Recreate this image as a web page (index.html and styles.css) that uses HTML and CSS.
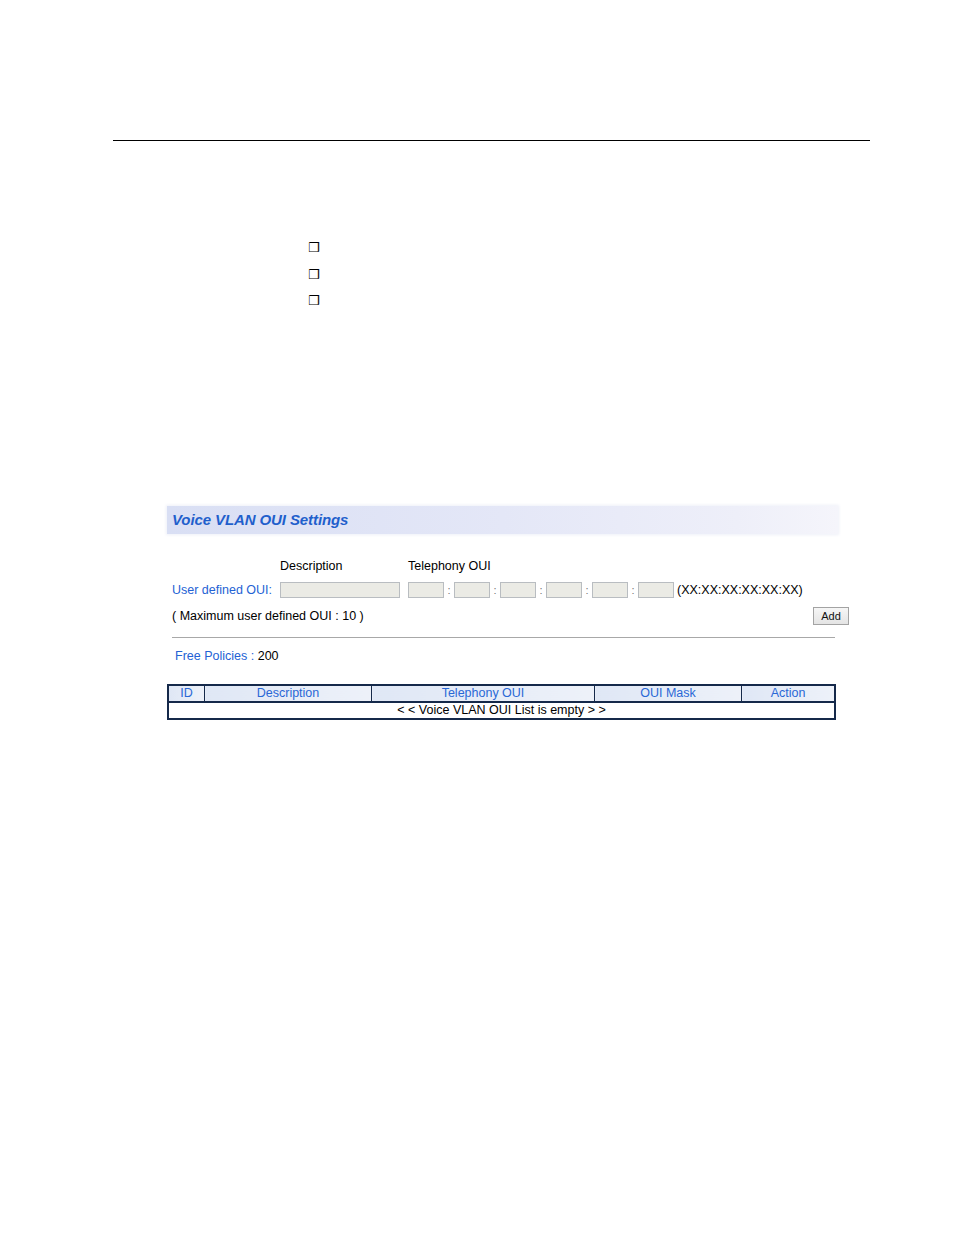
FILE: index.html
```html
<!DOCTYPE html>
<html>
<head>
<meta charset="utf-8">
<link rel="stylesheet" href="styles.css">
</head>
<body>
<div class="page">
  <div class="rule"></div>
  <ul class="bullets">
    <li>❒</li>
    <li>❒</li>
    <li>❒</li>
  </ul>
  <div class="panel">
    <div class="title-bar"><span class="title">Voice VLAN OUI Settings</span></div>
    <div class="form">
      <div class="row labels">
        <span class="lbl-desc">Description</span>
        <span class="lbl-tel">Telephony OUI</span>
      </div>
      <div class="row entry">
        <span class="blue lbl-user">User defined OUI:</span>
        <span class="inp inp-desc"></span>
        <span class="oui">
          <span class="inp inp-oui"></span><span class="sep">:</span>
          <span class="inp inp-oui"></span><span class="sep">:</span>
          <span class="inp inp-oui"></span><span class="sep">:</span>
          <span class="inp inp-oui"></span><span class="sep">:</span>
          <span class="inp inp-oui"></span><span class="sep">:</span>
          <span class="inp inp-oui"></span>
        </span>
        <span class="fmt">(XX:XX:XX:XX:XX:XX)</span>
      </div>
      <div class="row maxrow">
        <span>( Maximum user defined OUI : 10 )</span>
        <span class="btn">Add</span>
      </div>
    </div>
    <div class="divider"></div>
    <div class="free"><span class="blue">Free Policies :</span> 200</div>
    <table class="grid">
      <thead>
        <tr>
          <th class="c-id">ID</th>
          <th class="c-desc">Description</th>
          <th class="c-tel">Telephony OUI</th>
          <th class="c-mask">OUI Mask</th>
          <th class="c-act">Action</th>
        </tr>
      </thead>
      <tbody>
        <tr><td colspan="5">&lt; &lt; Voice VLAN OUI List is empty &gt; &gt;</td></tr>
      </tbody>
    </table>
  </div>
</div>
</body>
</html>
```
FILE: styles.css
```css
html, body {
  margin: 0;
  padding: 0;
  background: #ffffff;
}
.page {
  width: 954px;
  height: 1235px;
  padding-top: 140px;
  box-sizing: border-box;
  font-family: "Liberation Sans", Arial, sans-serif;
  font-size: 12.5px;
  color: #000;
}
.rule {
  margin-left: 113px;
  width: 757px;
  border-top: 1px solid #000;
}
.bullets {
  list-style: none;
  margin: 94px 0 0 308px;
  padding: 0;
}
.bullets li {
  font-family: "DejaVu Sans", sans-serif;
  font-size: 13px;
  font-weight: bold;
  height: 26.5px;
  line-height: 26px;
}
.panel {
  margin-left: 167px;
  margin-top: 191px;
  width: 690px;
}
.title-bar {
  width: 671px;
  height: 28px;
  box-sizing: border-box;
  padding-left: 5px;
  background: linear-gradient(to right, #d9dff4 0%, #e4e7f7 50%, #eeeff9 85%, #f5f5fb 100%);
  box-shadow: 0 0 3px 1px #eef0f8;
  display: flex;
  align-items: center;
}
.title {
  font-weight: bold;
  font-style: italic;
  font-size: 15px;
  color: #1f5fcc;
  letter-spacing: -0.1px;
}
.form {
  margin-top: 24px;
  padding-left: 5px;
}
.row {
  display: flex;
  align-items: center;
}
.labels {
  height: 16px;
}
.lbl-desc {
  margin-left: 108px;
  width: 128px;
}
.entry {
  margin-top: 8px;
  height: 16px;
}
.blue {
  color: #2462d4;
}
.lbl-user {
  width: 108px;
}
.inp {
  display: inline-block;
  height: 16px;
  box-sizing: border-box;
  border: 1px solid #b9bdc1;
  background: #ebebe5;
}
.inp-desc {
  width: 120px;
}
.oui {
  display: flex;
  align-items: center;
  margin-left: 8px;
}
.inp-oui {
  width: 36px;
}
.sep {
  width: 10px;
  text-align: center;
  color: #777;
  font-size: 11px;
}
.fmt {
  margin-left: 3px;
}
.maxrow {
  margin-top: 9px;
  height: 18px;
  justify-content: space-between;
  width: 677px;
}
.btn {
  width: 36px;
  height: 18px;
  box-sizing: border-box;
  border: 1px solid #a3a3a3;
  background: linear-gradient(#f6f6f6, #e4e4e4);
  font-size: 11px;
  text-align: center;
  line-height: 16px;
  color: #111;
}
.divider {
  margin-top: 12px;
  margin-left: 5px;
  width: 663px;
  border-top: 1px solid #a8a8a8;
}
.free {
  margin-top: 10px;
  margin-left: 8px;
  height: 16px;
  line-height: 16px;
}
.grid {
  margin-top: 20px;
  width: 669px;
  border-collapse: collapse;
  border: 2px solid #15294a;
  font-size: 12.5px;
}
.grid th {
  font-weight: normal;
  color: #2a68d6;
  height: 15px;
  padding: 0;
  line-height: 14px;
  background: linear-gradient(to right, #dfe7f5, #edf1f9);
  border: 1px solid #15294a;
  border-bottom: 2px solid #15294a;
}
.c-id { width: 35px; }
.c-desc { width: 166px; }
.c-tel { width: 222px; }
.c-mask { width: 146px; }
.grid td {
  text-align: center;
  height: 15px;
  line-height: 14px;
  padding: 0;
}
```
